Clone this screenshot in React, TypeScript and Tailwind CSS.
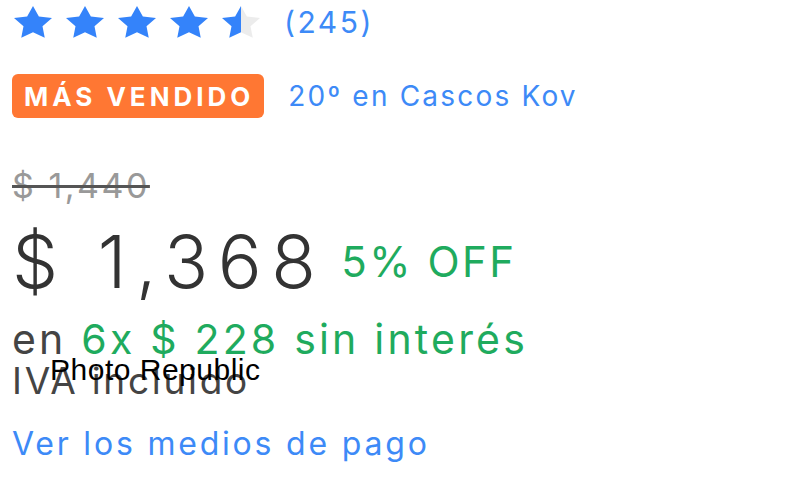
import React from 'react';

const Star = ({ fill = 'full' }: { fill?: 'full' | 'half' }) => (
  <svg viewBox="2 2 20 19.2" preserveAspectRatio="none" className="h-[32px] w-[38px]">
    <defs>
      <linearGradient id="half">
        <stop offset="50%" stopColor="#3483fa" />
        <stop offset="50%" stopColor="#ececec" />
      </linearGradient>
    </defs>
    <path
      d="M12 2l3.09 6.26L22 9.27l-5 4.87 1.18 6.88L12 17.77l-6.18 3.25L7 14.14 2 9.27l6.91-1.01z"
      fill={fill === 'full' ? '#3483fa' : 'url(#half)'}
    />
  </svg>
);

const App = () => {
  return (
    <div className="w-[800px] h-[500px] bg-white overflow-hidden font-['Inter','Noto_Sans',sans-serif]">
      <div className="pl-[12px] pt-[4px]">
        {/* rating */}
        <div className="flex items-center">
          <div className="flex gap-[14px] pl-[2px]">
            <Star />
            <Star />
            <Star />
            <Star />
            <Star fill="half" />
          </div>
          <span className="ml-[24px] text-[30px] leading-[36px] tracking-[2.5px] text-[#3d8af7]">(245)</span>
        </div>

        {/* badge */}
        <div className="mt-[34px] flex items-center">
          <span className="rounded-[6px] bg-[#ff7733] pl-[12px] pr-[10px] h-[44px] flex items-center text-[26px] font-bold tracking-[4px] text-white">
            MÁS VENDIDO
          </span>
          <span className="ml-[24px] text-[28px] tracking-[2.2px] text-[#3d8af7]">20º en Cascos Kov</span>
        </div>

        {/* prices */}
        <div className="mt-[48px] text-[34px] leading-[40px] tracking-[2.5px] text-[#999] line-through decoration-[#555]">$ 1,440</div>
        <div className="mt-[16px] flex items-center">
          <span className="text-[73px] leading-[80px] font-light tracking-[9.5px] text-[#333]">$ 1,368</span>
          <span className="ml-[16px] mb-[2px] text-[42px] tracking-[2.5px] text-[#1fab5e]">5% OFF</span>
        </div>
        <div className="mt-[15px] text-[41px] leading-[44px] tracking-[3.2px]">
          <span className="text-[#444]">en </span>
          <span className="text-[#1fab5e]">6x $ 228 sin interés</span>
        </div>
        <div className="relative">
          <div className="text-[37px] leading-[40px] tracking-[2.7px] text-[#444]">IVA incluido</div>
          <span className="absolute left-[38px] top-[-8px] font-['Liberation_Sans',Arial,sans-serif] text-[30px] leading-[34px] tracking-[0.5px] text-black">
            Photo Republic
          </span>
        </div>
        <div className="mt-[23px] text-[32px] leading-[40px] tracking-[2.8px] text-[#3d8af7]">Ver los medios de pago</div>
      </div>
    </div>
  );
};

export default App;
